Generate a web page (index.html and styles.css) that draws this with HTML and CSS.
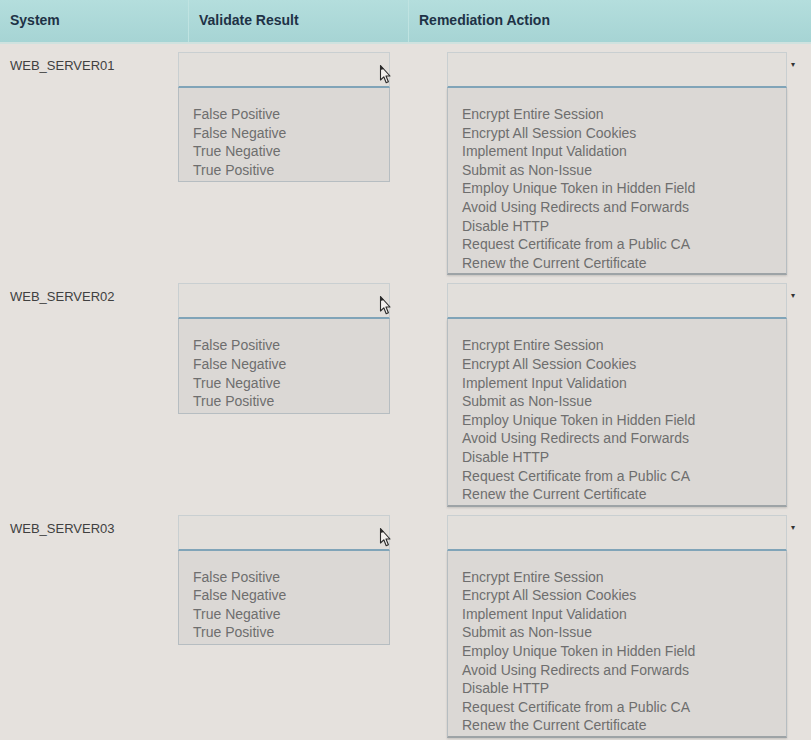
FILE: index.html
```html
<!DOCTYPE html>
<html lang="en">
<head>
    <meta charset="UTF-8">
    <title>Validate Results</title>
    <link rel="stylesheet" href="styles.css">
</head>
<body>
    <div class="header">
        <div class="col-system">System</div>
        <div class="col-validate">Validate Result</div>
        <div class="col-action">Remediation Action</div>
    </div>

    <div class="row">
        <div class="label">WEB_SERVER01</div>
        <div class="dropdown validate">
            <div class="select">
                <svg class="pointer" width="12" height="22" viewBox="0 0 12 22"><path d="M1.5 1.5 L1.5 16 L4.8 12.8 L7.2 18.8 L9.4 17.8 L7 12 L11 12 Z" fill="#f2f0ee" stroke="#2a2a2a" stroke-width="1.1" stroke-linejoin="round"/><path d="M1.5 1.5 L5 5 L1.5 6 Z" fill="#2a2a2a"/></svg>
            </div>
            <ul class="list">
                <li>False Positive</li>
                <li>False Negative</li>
                <li>True Negative</li>
                <li>True Positive</li>
            </ul>
        </div>
        <div class="dropdown action">
            <div class="select"></div>
            <ul class="list">
                <li>Encrypt Entire Session</li>
                <li>Encrypt All Session Cookies</li>
                <li>Implement Input Validation</li>
                <li>Submit as Non-Issue</li>
                <li>Employ Unique Token in Hidden Field</li>
                <li>Avoid Using Redirects and Forwards</li>
                <li>Disable HTTP</li>
                <li>Request Certificate from a Public CA</li>
                <li>Renew the Current Certificate</li>
            </ul>
        </div>
        <div class="caret">&#9662;</div>
    </div>

    <div class="row">
        <div class="label">WEB_SERVER02</div>
        <div class="dropdown validate">
            <div class="select">
                <svg class="pointer" width="12" height="22" viewBox="0 0 12 22"><path d="M1.5 1.5 L1.5 16 L4.8 12.8 L7.2 18.8 L9.4 17.8 L7 12 L11 12 Z" fill="#f2f0ee" stroke="#2a2a2a" stroke-width="1.1" stroke-linejoin="round"/><path d="M1.5 1.5 L5 5 L1.5 6 Z" fill="#2a2a2a"/></svg>
            </div>
            <ul class="list">
                <li>False Positive</li>
                <li>False Negative</li>
                <li>True Negative</li>
                <li>True Positive</li>
            </ul>
        </div>
        <div class="dropdown action">
            <div class="select"></div>
            <ul class="list">
                <li>Encrypt Entire Session</li>
                <li>Encrypt All Session Cookies</li>
                <li>Implement Input Validation</li>
                <li>Submit as Non-Issue</li>
                <li>Employ Unique Token in Hidden Field</li>
                <li>Avoid Using Redirects and Forwards</li>
                <li>Disable HTTP</li>
                <li>Request Certificate from a Public CA</li>
                <li>Renew the Current Certificate</li>
            </ul>
        </div>
        <div class="caret">&#9662;</div>
    </div>

    <div class="row">
        <div class="label">WEB_SERVER03</div>
        <div class="dropdown validate">
            <div class="select">
                <svg class="pointer" width="12" height="22" viewBox="0 0 12 22"><path d="M1.5 1.5 L1.5 16 L4.8 12.8 L7.2 18.8 L9.4 17.8 L7 12 L11 12 Z" fill="#f2f0ee" stroke="#2a2a2a" stroke-width="1.1" stroke-linejoin="round"/><path d="M1.5 1.5 L5 5 L1.5 6 Z" fill="#2a2a2a"/></svg>
            </div>
            <ul class="list">
                <li>False Positive</li>
                <li>False Negative</li>
                <li>True Negative</li>
                <li>True Positive</li>
            </ul>
        </div>
        <div class="dropdown action">
            <div class="select"></div>
            <ul class="list">
                <li>Encrypt Entire Session</li>
                <li>Encrypt All Session Cookies</li>
                <li>Implement Input Validation</li>
                <li>Submit as Non-Issue</li>
                <li>Employ Unique Token in Hidden Field</li>
                <li>Avoid Using Redirects and Forwards</li>
                <li>Disable HTTP</li>
                <li>Request Certificate from a Public CA</li>
                <li>Renew the Current Certificate</li>
            </ul>
        </div>
        <div class="caret">&#9662;</div>
    </div>
</body>
</html>
```

FILE: styles.css
```css
body {
    font-family: "Liberation Sans", Arial, sans-serif;
    background-color: #e5e1dd;
    margin: 0;
    padding: 0;
    height: 740px;
    overflow: hidden;
}

.header {
    display: flex;
    height: 42px;
    background: linear-gradient(#b4dedd, #a6d4d4);
    border-bottom: 2px solid #cfe2df;
    color: #1e3246;
    font-size: 14px;
    font-weight: bold;
}

.header > div {
    display: flex;
    align-items: center;
    padding-bottom: 2px;
}

.col-system {
    width: 178px;
    padding-left: 10px;
    border-right: 1px solid #bfe3e1;
}

.col-validate {
    width: 209px;
    padding-left: 10px;
    border-right: 1px solid #bfe3e1;
}

.col-action {
    padding-left: 10px;
}

.row {
    display: flex;
    align-items: flex-start;
    padding-top: 8px;
}

.label {
    width: 168px;
    padding-left: 10px;
    padding-top: 6px;
    font-size: 13px;
    line-height: 16px;
    color: #404040;
}

.dropdown {
    display: flex;
    flex-direction: column;
}

.validate {
    width: 212px;
}

.action {
    width: 340px;
    margin-left: 57px;
}

.select {
    position: relative;
    height: 33px;
    background-color: #e2dfdb;
    border: 1px solid #c9cfd1;
    border-bottom: 2px solid #80a4b8;
}

.pointer {
    position: absolute;
    right: -2px;
    top: 11px;
}

.list {
    list-style: none;
    margin: 0;
    padding: 17px 14px 2px;
    background-color: #dbd8d5;
    border: 1px solid #b6bdc1;
    border-top: none;
    font-size: 14px;
    line-height: 18.6px;
    color: #6e6e6e;
}

.action .list {
    padding-bottom: 1px;
    border-bottom: 2px solid #9da3a6;
    box-shadow: 0 1px 2px rgba(0, 0, 0, 0.15);
}

.caret {
    margin-left: 4px;
    margin-top: 8px;
    font-size: 8px;
    color: #333;
}
```
